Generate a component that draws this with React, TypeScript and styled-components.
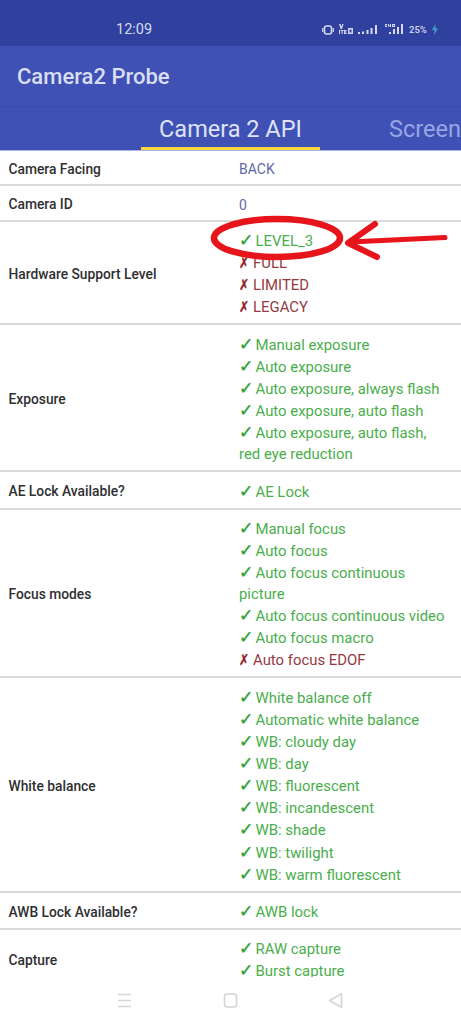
import React from "react";
import styled, { createGlobalStyle } from "styled-components";

const Global = createGlobalStyle`
  html, body { margin: 0; padding: 0; background: #fff; }
  #root { width: 461px; height: 1024px; }
  * { box-sizing: border-box; }
`;

const Screen = styled.div`
  width: 461px;
  height: 1024px;
  display: flex;
  flex-direction: column;
  overflow: hidden;
  font-family: Roboto, "DejaVu Sans", sans-serif;
  background: #fff;
`;

const StatusBar = styled.div`
  height: 46px;
  flex: none;
  background: #30409f;
  color: #d5daf0;
  display: flex;
  align-items: center;
  padding: 13px 0 0 116px;
`;

const Clock = styled.span`
  font-size: 14.5px;
  width: 206px;
`;

const StatusIcons = styled.div`
  display: flex;
  align-items: center;
  gap: 5px;
`;

const FourG = styled.svg`
  margin-left: 3px;
`;

const Percent = styled.span`
  font-size: 9.5px;
  font-weight: 500;
`;

const AppBar = styled.div`
  height: 61px;
  flex: none;
  background: #3f51b5;
  color: #d9def3;
  font-size: 22px;
  font-weight: 500;
  display: flex;
  align-items: center;
  padding-left: 17px;
  border-bottom: 1px solid #3b4cab;
`;

const Tabs = styled.div`
  height: 44px;
  flex: none;
  background: #3f51b5;
  display: flex;
  overflow: hidden;
  padding-left: 141px;
  border-bottom: 1px solid #a9b4e6;
`;

const Tab = styled.div<{ $active?: boolean }>`
  flex: none;
  width: ${(p) => (p.$active ? "179px" : "auto")};
  margin-left: ${(p) => (p.$active ? "0" : "69px")};
  height: 43px;
  text-align: center;
  font-size: 23.5px;
  line-height: 44px;
  color: ${(p) => (p.$active ? "#dfe3f5" : "#98a5e4")};
  border-bottom: 3px solid ${(p) => (p.$active ? "#fbd63c" : "transparent")};
`;

const Content = styled.div`
  position: relative;
  flex: 1;
  min-height: 0;
  overflow: hidden;
`;

const Row = styled.div`
  display: grid;
  grid-template-columns: 239px 1fr;
  align-items: center;
  padding: 9.4px 14px 5px 0;
  border-bottom: 2px solid #d8dadc;
`;

const Label = styled.div`
  padding-left: 8.5px;
  margin-bottom: 2px;
  font-size: 13.8px;
  font-weight: 500;
  color: #2f2f32;
`;

const Plain = styled.div`
  font-size: 14px;
  line-height: 19px;
  color: #5e6aa5;
`;

const Items = styled.div`
  display: flex;
  flex-direction: column;
  gap: 1.1px;
  font-size: 14.9px;
  line-height: 21px;
`;

const Item = styled.div<{ $ok: boolean }>`
  color: ${(p) => (p.$ok ? "#49ae4b" : "#943a40")};
`;

const Mark = styled.span<{ $ok: boolean }>`
  display: inline-block;
  width: ${(p) => (p.$ok ? "16.500px" : "14px")};
  line-height: 0;
  font-family: "DejaVu Sans", sans-serif;
  font-size: ${(p) => (p.$ok ? "17px" : "15px")};
  color: ${(p) => (p.$ok ? "#2f9f35" : "#8f2027")};
  -webkit-text-stroke: 0.4px currentColor;
  transform-origin: left center;
  transform: ${(p) => (p.$ok ? "none" : "scaleX(0.8)")};
`;

const Annotation = styled.svg`
  position: absolute;
  left: 200px;
  top: 60px;
  width: 261px;
  height: 60px;
  pointer-events: none;
`;

const NavBar = styled.div`
  height: 47px;
  flex: none;
  background: #fff;
  display: flex;
  align-items: flex-start;
  justify-content: space-between;
  padding: 16px 118px 0 117px;
`;

const NavIcon = styled.svg`
  width: 15px;
  height: 15px;
  fill: none;
  stroke: #d3d5d7;
  stroke-width: 1.6;
`;

type Entry = [boolean, string];
const ok = (s: string): Entry => [true, s];
const no = (s: string): Entry => [false, s];

const rows: { label: string; items: Entry[] }[] = [
  { label: "Hardware Support Level", items: [ok("LEVEL_3"), no("FULL"), no("LIMITED"), no("LEGACY")] },
  {
    label: "Exposure",
    items: [
      ok("Manual exposure"),
      ok("Auto exposure"),
      ok("Auto exposure, always flash"),
      ok("Auto exposure, auto flash"),
      ok("Auto exposure, auto flash, red eye reduction"),
    ],
  },
  { label: "AE Lock Available?", items: [ok("AE Lock")] },
  {
    label: "Focus modes",
    items: [
      ok("Manual focus"),
      ok("Auto focus"),
      ok("Auto focus continuous picture"),
      ok("Auto focus continuous video"),
      ok("Auto focus macro"),
      no("Auto focus EDOF"),
    ],
  },
  {
    label: "White balance",
    items: [
      ok("White balance off"),
      ok("Automatic white balance"),
      ok("WB: cloudy day"),
      ok("WB: day"),
      ok("WB: fluorescent"),
      ok("WB: incandescent"),
      ok("WB: shade"),
      ok("WB: twilight"),
      ok("WB: warm fluorescent"),
    ],
  },
  { label: "AWB Lock Available?", items: [ok("AWB lock")] },
  { label: "Capture", items: [ok("RAW capture"), ok("Burst capture")] },
];

export default function App() {
  return (
    <Screen>
      <Global />
      <StatusBar>
        <Clock>12:09</Clock>
        <StatusIcons>
          <svg width="12" height="10" viewBox="0 0 12 10" fill="none" stroke="#d5daf0">
            <rect x="2.500" y="1" width="7" height="8" rx="2" strokeWidth="1.6" />
            <path d="M.7 3v4M11.300 3v4" strokeWidth="1.2" />
          </svg>
          <svg width="14" height="11" viewBox="0 0 14 11" fill="#d5daf0">
            <path d="M0 0h1.500l.8 3 .8-3h1.400L3 5H1.600zM0 6h1v4H0zM1.600 6h3v1h-1v3h-1V7h-1zM5 6h2.500v1H6v.5h1.500v1H6V9h1.500v1H5zM9 4h5v6H9zM10.500 5.500v3h2v-3z" />
          </svg>
          <svg width="19" height="10" viewBox="0 0 19 10" fill="#d5daf0">
            <rect x="0" y="7" width="2" height="2" />
            <rect x="4" y="6.500" width="2" height="2.500" />
            <rect x="8.500" y="5" width="2" height="4" />
            <rect x="12.500" y="3" width="2" height="6" />
            <rect x="17" y="0" width="2" height="9" />
          </svg>
          <FourG width="19" height="11" viewBox="0 0 19 11" fill="#d5daf0">
            <path d="M0 0h2v1H1v.5h1V3H0V2h1v-.5H0zM3 0h1v1.500h1V0h1v3H5V2.500H3zM7 0h3v3H7zM8 1v1h1V1z" />
            <rect x="4" y="8" width="2" height="2" />
            <rect x="8" y="5" width="2" height="5" />
            <rect x="12" y="3" width="2" height="7" />
            <rect x="16" y="0" width="2" height="10" />
          </FourG>
          <Percent>25%</Percent>
          <svg width="6" height="11" viewBox="0 0 6 11" fill="#3f9fc4">
            <path d="M3.500 0 0 6h2.500L2 11l4-6.500H3.500z" />
          </svg>
        </StatusIcons>
      </StatusBar>
      <AppBar>Camera2 Probe</AppBar>
      <Tabs>
        <Tab $active>Camera 2 API</Tab>
        <Tab>Screen</Tab>
      </Tabs>
      <Content>
        <Row>
          <Label>Camera Facing</Label>
          <Plain>BACK</Plain>
        </Row>
        <Row>
          <Label>Camera ID</Label>
          <Plain>0</Plain>
        </Row>
        {rows.map((r) => (
          <Row key={r.label}>
            <Label>{r.label}</Label>
            <Items>
              {r.items.map(([good, text]) => (
                <Item key={text} $ok={good}>
                  <Mark $ok={good}>{good ? "✓" : "✗"}</Mark>
                  {text}
                </Item>
              ))}
            </Items>
          </Row>
        ))}
        <Annotation viewBox="0 0 261 60" fill="none" stroke="#e8141c" strokeLinecap="round" strokeLinejoin="round">
          <ellipse cx="77" cy="27" rx="63" ry="19" strokeWidth="6.500" />
          <path d="M245 26.500 150 31" strokeWidth="5" />
          <path d="M175 13 148 32 177 46" strokeWidth="6" />
        </Annotation>
      </Content>
      <NavBar>
        <NavIcon viewBox="0 0 15 15">
          <path d="M1 1.500h13M1 7.500h13M1 13.500h13" />
        </NavIcon>
        <NavIcon viewBox="0 0 15 15">
          <rect x="1.500" y="1" width="12" height="13" rx="2.500" />
        </NavIcon>
        <NavIcon viewBox="0 0 15 15">
          <path d="M13.500 .8v13.400L1.500 7.500z" strokeLinejoin="round" />
        </NavIcon>
      </NavBar>
    </Screen>
  );
}
